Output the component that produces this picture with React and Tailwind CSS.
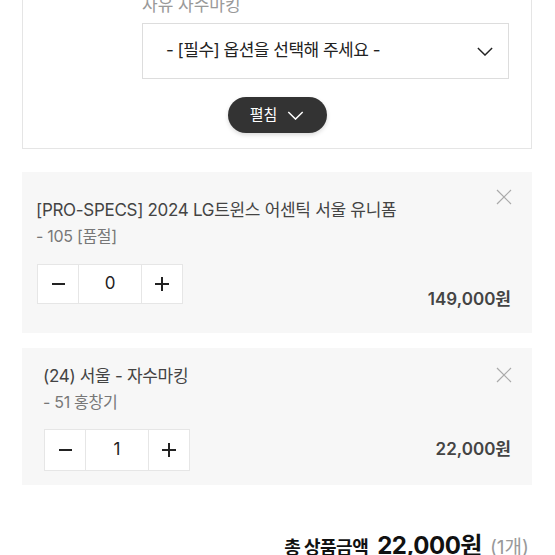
import { useState } from "react";

const font = "font-['Inter','Noto_Sans_CJK_KR',sans-serif]";

const Chevron = ({ className }) => (
  <svg viewBox="0 0 18 10" className={className} fill="none" stroke="currentColor" strokeWidth="1.6">
    <path d="M1 1l8 8 8-8" />
  </svg>
);

const CloseIcon = () => (
  <svg viewBox="0 0 16 16" className="w-4 h-4 text-[#aaa]" fill="none" stroke="currentColor" strokeWidth="1.2">
    <path d="M1 1l14 14M15 1L1 15" />
  </svg>
);

const Qty = ({ value, h }) => (
  <div className={`flex bg-white border border-[#e6e6e6] ${h}`}>
    <button className="w-[41px] flex items-center justify-center border-r border-[#e6e6e6]">
      <span className="block w-[13px] h-[1.5px] bg-[#222]" />
    </button>
    <div className="w-[62px] flex items-center justify-center text-[17px] text-[#222]">{value}</div>
    <button className="w-[41px] flex items-center justify-center border-l border-[#e6e6e6]">
      <span className="relative block w-[14px] h-[14px]">
        <span className="absolute left-0 top-[6px] w-[14px] h-[1.5px] bg-[#222]" />
        <span className="absolute top-0 left-[6px] h-[14px] w-[1.5px] bg-[#222]" />
      </span>
    </button>
  </div>
);

const items = [
  {
    title: "[PRO-SPECS] 2024 LG트윈스 어센틱 서울 유니폼",
    sub: "- 105 [품절]",
    qty: 0,
    price: "149,000원",
  },
  {
    title: "(24) 서울 - 자수마킹",
    sub: "- 51 홍창기",
    qty: 1,
    price: "22,000원",
  },
];

export default function App() {
  const [open, setOpen] = useState(false);

  return (
    <div className={`${font} w-[555px] h-[555px] overflow-hidden bg-white pl-[22px] pr-[23px]`}>
      {/* option panel, top is scrolled off */}
      <div className="-mt-[7px] border border-t-0 border-[#e5e5e5] pb-[15px]">
        <div className="pl-[119px] pr-[22px]">
          <div className="h-6 leading-6 text-[17px] text-[#999]">자유 자수마킹</div>
          <div className="mt-[6px] h-[56px] border border-[#ddd] flex items-center justify-between pl-[23px] pr-[15px]">
            <span className="text-[17px] text-[#222] tracking-[-0.5px]">- [필수] 옵션을 선택해 주세요 -</span>
            <Chevron className="w-[16px] h-[9px] text-[#222]" />
          </div>
        </div>
        <div className="flex justify-center mt-[18px]">
          <button
            onClick={() => setOpen(!open)}
            className="w-[99px] h-[36px] rounded-full bg-[#333] text-white flex items-center justify-center gap-[10px] shadow-[0_2px_4px_rgba(0,0,0,0.15)]"
          >
            <span className="text-[15px]">펼침</span>
            <Chevron className="w-[17px] h-[9px] text-white" />
          </button>
        </div>
      </div>

      <div className="mt-[23px] flex flex-col gap-[15px]">
        {items.map((it, i) => (
          <div
            key={i}
            className={`relative bg-[#f7f7f7] ${i === 0 ? "pt-[26px] pb-[22px] pl-[14px]" : "pt-[16px] pb-[14px] pl-[21px]"} pr-[21px]`}
          >
            <button className={`absolute right-[20px] ${i === 0 ? "top-[17px]" : "top-[19px]"}`}>
              <CloseIcon />
            </button>
            <div className="h-6 leading-6 text-[17px] text-[#444] tracking-[-0.3px]">{it.title}</div>
            <div className="mt-[3px] h-[22px] leading-[22px] text-[16px] text-[#777] tracking-[-0.3px]">{it.sub}</div>
            <div className={`flex justify-between items-start ${i === 0 ? "mt-[17px]" : "mt-[16px]"} pl-[1px]`}>
              <Qty value={it.qty} h={i === 0 ? "h-[40px]" : "h-[42px]"} />
              <div className={`${i === 0 ? "mt-[23px]" : "mt-[8px]"} h-6 leading-6 text-[17px] font-semibold text-[#444]`}>
                {it.price}
              </div>
            </div>
          </div>
        ))}
      </div>

      <div className="mt-[43px] flex justify-end items-baseline pr-[3px]">
        <span className="text-[18px] font-bold text-[#111] tracking-[-0.5px]">총 상품금액</span>
        <span className="ml-[9px] text-[24px] font-bold text-[#111] tracking-[-0.5px]">22,000원</span>
        <span className="ml-[8px] text-[19px] text-[#999]">(1개)</span>
      </div>
    </div>
  );
}
